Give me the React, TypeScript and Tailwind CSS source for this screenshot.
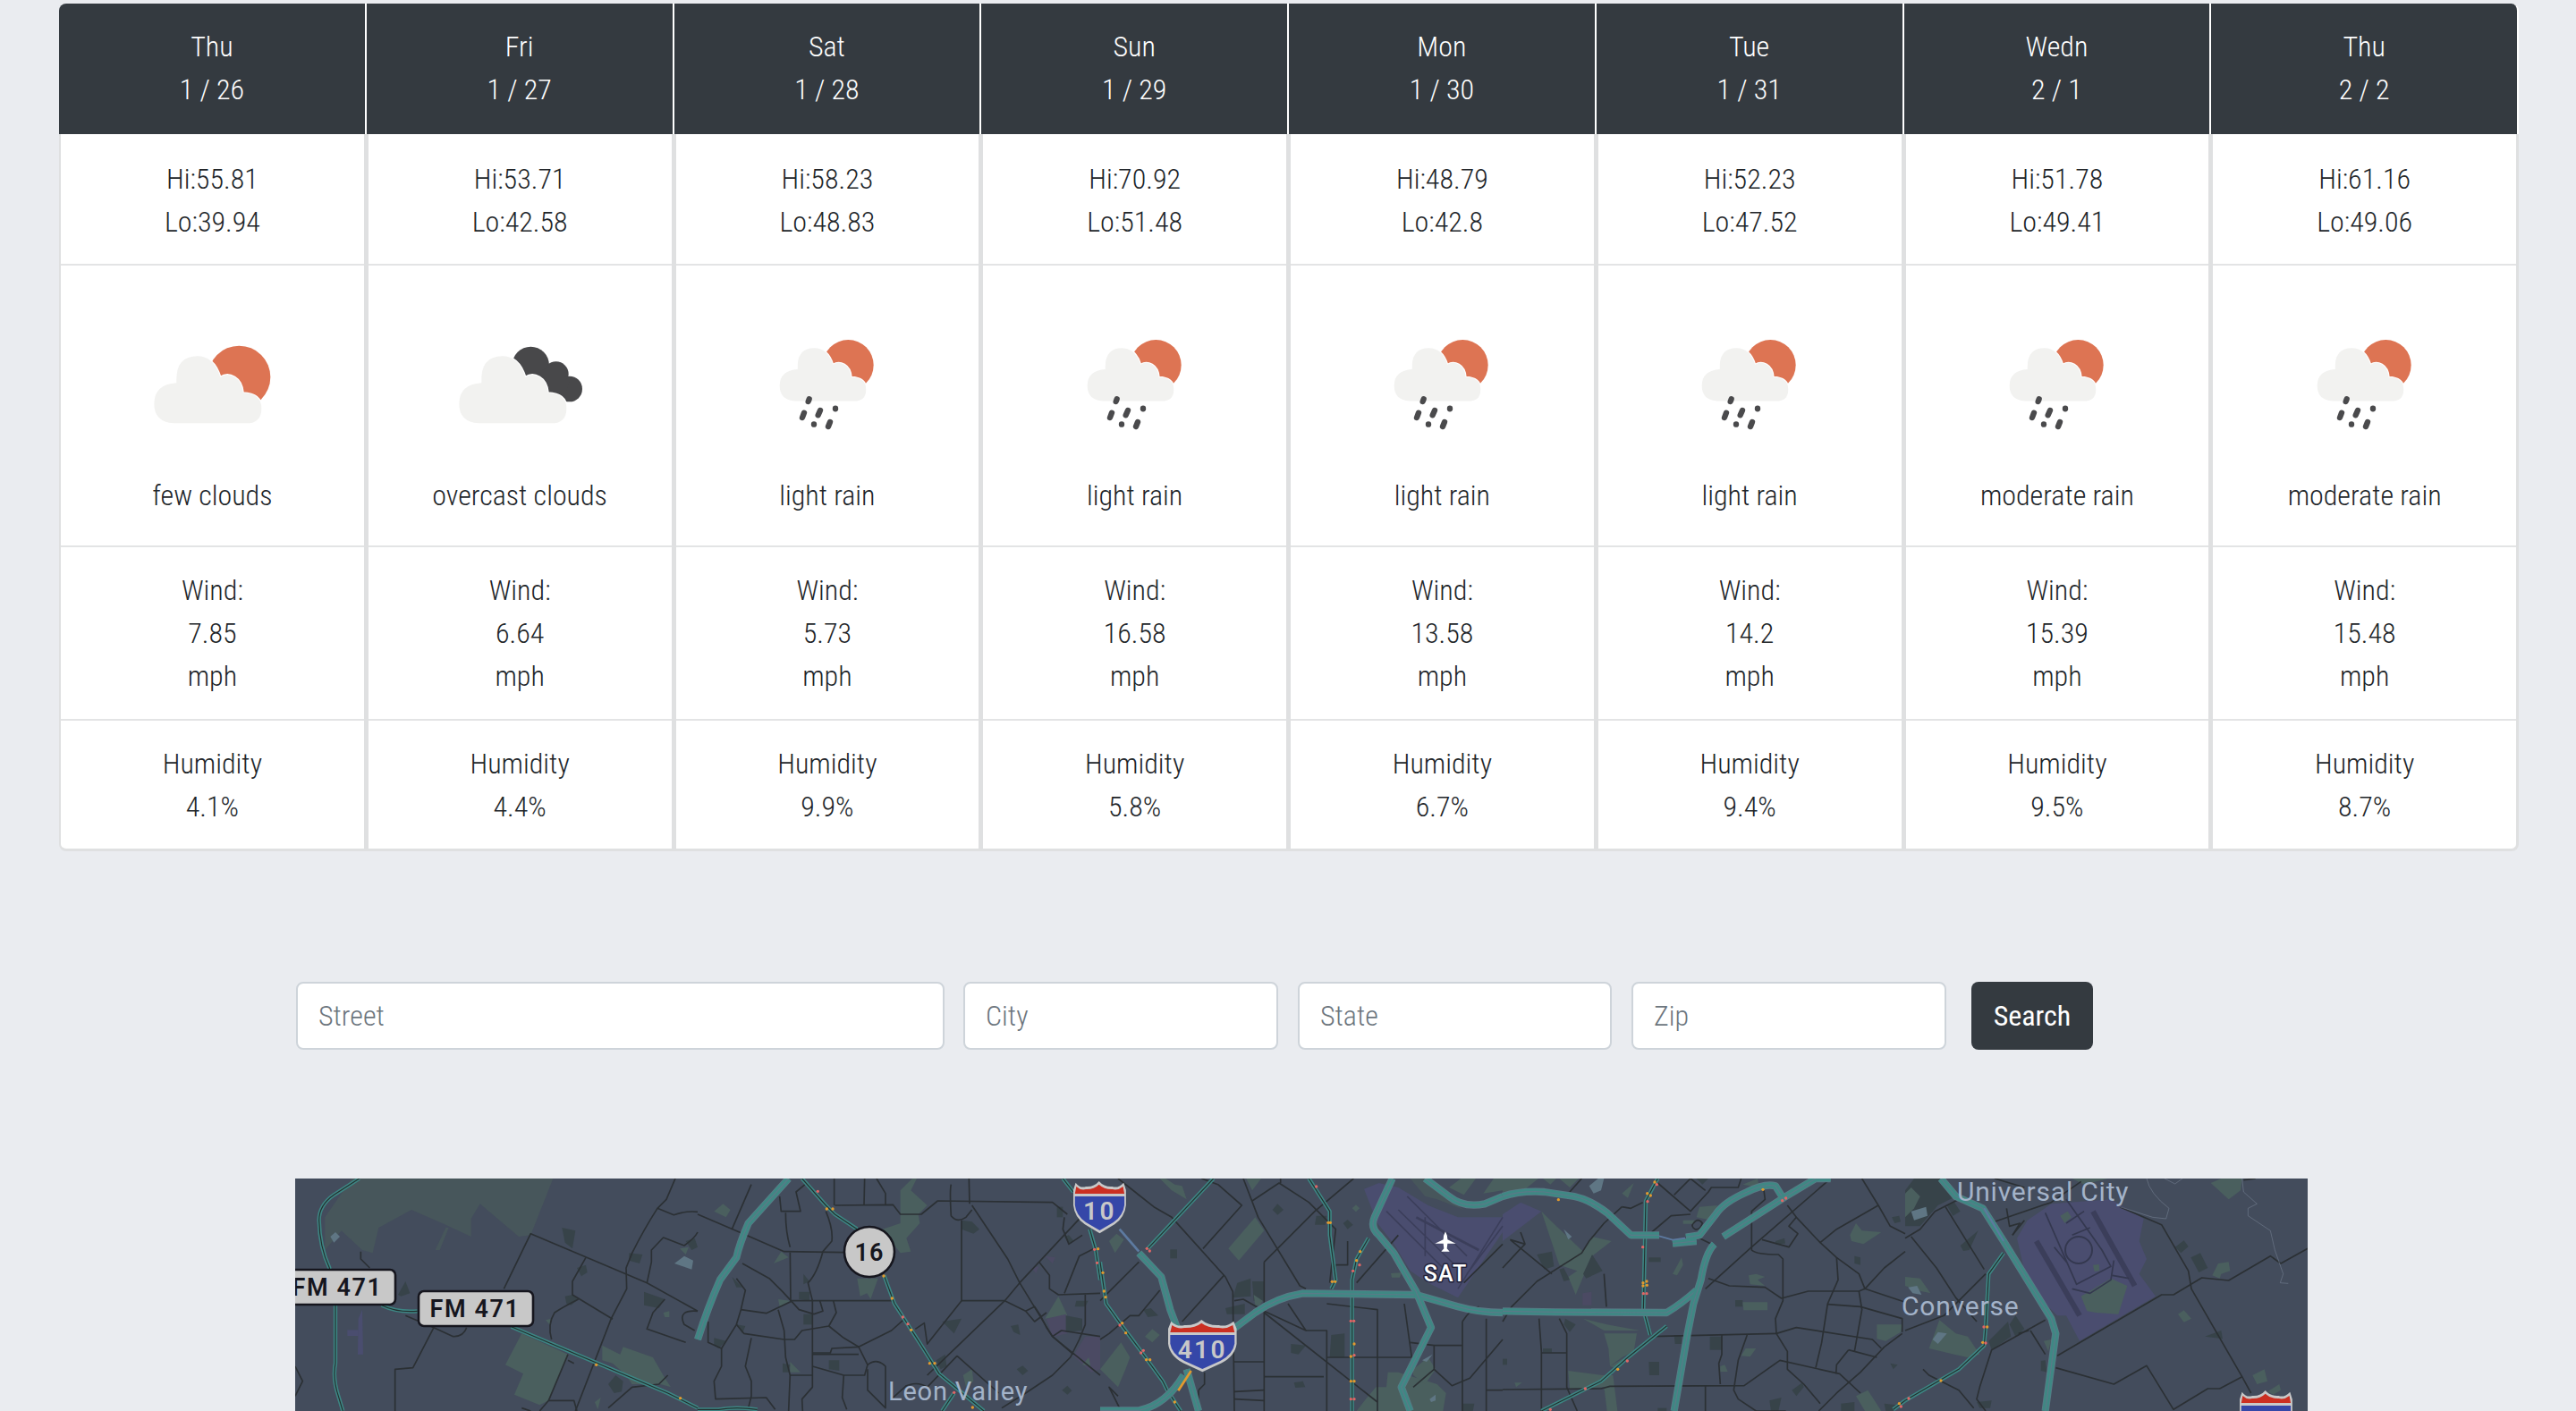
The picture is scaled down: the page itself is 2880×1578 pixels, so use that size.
import React from "react";

const days = [
  { d: "Thu", date: "1 / 26", hi: "55.81", lo: "39.94", icon: "few", desc: "few clouds", wind: "7.85", hum: "4.1%" },
  { d: "Fri", date: "1 / 27", hi: "53.71", lo: "42.58", icon: "over", desc: "overcast clouds", wind: "6.64", hum: "4.4%" },
  { d: "Sat", date: "1 / 28", hi: "58.23", lo: "48.83", icon: "rain", desc: "light rain", wind: "5.73", hum: "9.9%" },
  { d: "Sun", date: "1 / 29", hi: "70.92", lo: "51.48", icon: "rain", desc: "light rain", wind: "16.58", hum: "5.8%" },
  { d: "Mon", date: "1 / 30", hi: "48.79", lo: "42.8", icon: "rain", desc: "light rain", wind: "13.58", hum: "6.7%" },
  { d: "Tue", date: "1 / 31", hi: "52.23", lo: "47.52", icon: "rain", desc: "light rain", wind: "14.2", hum: "9.4%" },
  { d: "Wedn", date: "2 / 1", hi: "51.78", lo: "49.41", icon: "rain", desc: "moderate rain", wind: "15.39", hum: "9.5%" },
  { d: "Thu", date: "2 / 2", hi: "61.16", lo: "49.06", icon: "rain", desc: "moderate rain", wind: "15.48", hum: "8.7%" },
];

const CLOUD = "M165,340 Q100,335 100,275 Q100,210 175,205 Q170,115 245,115 Q300,115 322,185 Q345,170 370,185 Q395,200 398,238 Q460,240 460,290 Q460,340 410,340 Z";

function WeatherIcon({ kind }: { kind: string }) {
  if (kind === "few") {
    return (
      <svg viewBox="0 0 200 200" className="h-[200px] w-[200px]">
        <g transform="translate(2 40) scale(.33333)">
          <circle cx="385" cy="185" r="105" fill="#dd7453" />
          <path d={CLOUD} fill="#f2f2f0" stroke="#fff" strokeWidth="7" />
          <path d={CLOUD} fill="#f2f2f0" />
        </g>
      </svg>
    );
  }
  if (kind === "over") {
    return (
      <svg viewBox="0 0 200 200" className="h-[200px] w-[200px]">
        <g transform="translate(9 40) scale(.33333)">
          <g fill="#48484a">
            <circle cx="310" cy="145" r="62" />
            <circle cx="395" cy="175" r="42" />
            <circle cx="440" cy="225" r="43" />
            <polygon points="300,190 390,140 440,200 420,260 330,220" />
          </g>
          <g transform="translate(-30 0)">
            <path d={CLOUD} fill="#f2f2f0" stroke="#fff" strokeWidth="7" />
            <path d={CLOUD} fill="#f2f2f0" />
          </g>
        </g>
      </svg>
    );
  }
  return (
    <svg viewBox="0 0 200 200" className="h-[200px] w-[200px]">
      <g transform="translate(-5 20) scale(.33333)">
        <circle cx="385" cy="205" r="85" fill="#dd7453" />
        <g transform="translate(74.5 57.15) scale(.805 .79)">
          <path d={CLOUD} fill="#f2f2f0" stroke="#fff" strokeWidth="8" />
          <path d={CLOUD} fill="#f2f2f0" />
        </g>
        <g stroke="#4a4a4c" strokeWidth="19" strokeLinecap="round">
          <line x1="254" y1="319" x2="251" y2="327" />
          <line x1="237" y1="365" x2="231" y2="381" />
          <line x1="291" y1="357" x2="284" y2="373" />
          <line x1="342" y1="350" x2="342" y2="352" />
          <line x1="270" y1="403" x2="270" y2="404" />
          <line x1="324" y1="396" x2="318" y2="411" />
        </g>
      </g>
    </svg>
  );
}

const C = { g: "#4a5f5e", d: "#374349", b: "#47565b", w: "#5f7684", a: "#4a4d6f", v: "#4b4a63" };

type Crop = { x: number; parks: [string, string][]; minor: string[]; sec: string[]; fwy: string[]; dots: [number, number, string?][] };

const crops: Crop[] = [
  {
    x: 0,
    parks: [
      [C.b, "100,130 190,0 865,0 790,190 750,195 620,85 590,135 590,195 505,155 390,105 280,165 260,250 225,240 155,175 100,240"],
      [C.b, "505,165 515,165 485,240 470,240"],
      [C.g, "705,625 760,520 915,590 850,745 820,760 735,725 765,655"],
      [C.g, "1030,560 1060,575 1090,590 1100,565 1200,600 1240,670 1260,700 1225,690 1130,690 1110,660 1065,620 1030,610"],
      [C.d, "1050,690 1075,660 1100,680 1095,715 1070,720"],
      [C.d, "895,165 940,175 930,235 905,215"],
      [C.d, "1120,250 1165,255 1155,285 1120,275"],
      [C.d, "945,300 975,290 980,315 960,328"],
      [C.d, "1170,380 1240,405 1220,435 1170,425"],
      [C.d, "905,395 930,390 950,405 925,425 910,420"],
      [C.d, "345,390 370,345 385,385 355,395"],
      [C.d, "1310,210 1340,200 1350,230 1330,240"],
      [C.w, "1272,285 1305,260 1335,275 1330,305"],
      [C.g, "1290,235 1320,230 1310,255"],
      [C.g, "1235,450 1255,445 1255,465 1240,465"],
      [C.g, "840,475 860,470 855,492"],
      [C.g, "1005,750 1025,735 1015,775"],
      [C.w, "118,195 135,180 150,195 130,215"],
      [C.a, "212,470 225,440 228,590 210,590"],
      [C.a, "175,508 212,508 212,528 175,528"],
    ],
    minor: [
      "M700,370 L790,185 L1180,350 L1350,445",
      "M1275,0 L1245,70 L1215,100 Q1170,170 1130,250 L1110,300 L1112,370 L1060,470 L940,780",
      "M1215,100 L1270,122 Q1310,108 1350,112",
      "M975,265 L930,345 L930,390 L1065,472",
      "M950,405 Q900,430 870,450 Q845,490 860,540",
      "M1180,350 L1195,280 L1195,240 L1235,198 L1305,225 Q1340,200 1350,180",
      "M1240,405 L1200,450 L1180,505 L1310,550 M1350,445 Q1280,440 1305,490 L1340,510",
      "M465,500 L395,635 L335,640 L335,780",
      "M370,460 L465,500 L530,530 Q565,530 575,500",
      "M0,630 L25,680 L0,730",
      "M915,590 L850,745 L820,780 M915,610 L935,620",
      "M760,770 L790,780 M850,745 L935,745 L945,780",
      "M1250,660 L1220,690 L1130,700 L1050,770",
      "M220,245 L220,270 L250,300",
    ],
    sec: [
      "M215,0 L130,55 Q80,90 80,140 Q82,230 115,300 L135,420 L135,620 Q125,670 145,730 L160,780",
      "M290,425 Q340,450 410,445",
      "M725,497 L1250,720 L1350,770",
    ],
    fwy: [],
    dots: [[1010, 625], [1292, 737]],
  },
  {
    x: 450,
    parks: [
      [C.g, "720,0 735,0 715,40 770,90 740,120 745,150 700,200 715,245 680,250 640,200 620,170 680,150 680,100 680,40"],
      [C.g, "535,335 605,335 580,405 568,385 545,395"],
      [C.g, "55,110 85,85 110,105 95,130"],
      [C.g, "255,285 280,245 305,265"],
      [C.g, "270,405 310,410 275,430"],
      [C.g, "310,615 345,650 310,650"],
      [C.d, "355,320 375,345 355,355"],
      [C.d, "340,380 375,380 375,410 340,405"],
      [C.d, "355,455 385,455 385,490 355,490"],
      [C.d, "440,610 475,610 475,645 440,640"],
      [C.d, "285,620 310,625 305,650 285,650"],
      [C.d, "55,535 95,545 70,570 55,560"],
      [C.d, "115,330 150,365 130,365"],
      [C.d, "130,490 160,495 150,520"],
      [C.d, "820,480 885,470 860,520"],
      [C.d, "1050,495 1075,490 1082,525 1060,515"],
      [C.d, "800,610 830,590 835,630 815,640"],
      [C.d, "1070,640 1090,628 1108,645 1090,660"],
      [C.d, "1222,710 1240,695 1255,712 1240,725"],
      [C.d, "885,140 920,145 945,170 925,185 885,170"],
      [C.d, "1205,95 1225,95 1225,130 1205,130"],
      [C.d, "1230,195 1245,190 1262,210 1245,220"],
      [C.g, "1165,470 1210,395 1240,460"],
      [C.v, "1170,470 1235,455 1240,520 1190,532"],
      [C.v, "1260,595 1300,530 1350,530 1350,640 1320,650"],
      [C.d, "1235,460 1290,470 1290,510 1235,515"],
      [C.d, "1270,410 1310,410 1300,430 1265,430"],
      [C.g, "1290,625 1312,600 1318,630"],
      [C.v, "1165,260 1200,265 1190,285"],
      [C.v, "1120,300 1145,295 1135,318"],
      [C.g, "890,660 920,640 925,680 900,700"],
    ],
    minor: [
      "M0,120 L140,180 L290,245 L490,248",
      "M180,20 L115,170",
      "M310,248 L312,410 L655,410",
      "M295,115 Q295,180 310,230",
      "M360,20 L330,45 L345,110 L280,110 L275,60",
      "M430,110 Q455,170 450,210 L420,245 Q400,320 370,350 L385,410 L385,700 L350,740 L352,780",
      "M460,90 L655,88 L680,120 L750,120 L805,75 L1190,80 L1240,120",
      "M458,0 L458,90 M560,0 L558,88 M600,0 L630,50 L630,88 M850,20 Q845,40 850,125 Q870,150 900,130 L920,105 M910,0 L912,85 M885,140 L885,410 L1030,410",
      "M920,90 L1040,270 L1080,350 L1190,530 L1350,660",
      "M1285,130 L1080,350 L1030,410 L770,660",
      "M885,410 L770,555 L760,485 L730,505",
      "M150,285 L240,335 L285,380 L315,412 L340,440 L390,455 L420,445 L410,410",
      "M130,335 L160,375 L145,440 L130,490 L80,570 L35,550 L35,480",
      "M145,440 L230,452 L315,412",
      "M270,440 L290,510 L295,600 L310,660 L305,780",
      "M130,490 L155,520 L290,540 L325,540 L350,510 L440,495 L465,450 L455,410",
      "M180,535 L160,630 L180,680 L180,730 L170,770",
      "M80,570 L80,630 L55,680 L60,740 L230,735 L260,775",
      "M440,495 L490,535 L540,565 L570,625 L560,660 L490,660 L385,630",
      "M385,585 L445,585 L450,570 L540,565 L650,510 L695,470",
      "M385,590 L540,590",
      "M310,660 L385,660 M490,660 L485,735 L500,775",
      "M570,625 Q600,600 630,630 L630,770 L570,710 L570,640",
      "M1030,410 L1100,445 L1130,430 L1150,460 L1170,500 L1190,530 L1260,590 M1100,445 L1130,480 L1170,450",
      "M1190,530 L1220,510 L1350,530",
      "M1145,280 L1180,325 L1180,370 L1210,390 L1350,385 M1230,385 L1280,260 L1330,235",
      "M1250,600 L1280,540 L1300,490 L1300,390",
      "M870,595 L1010,720 M1250,600 L1190,660 L1100,720 L1020,770",
      "M770,700 Q740,680 700,695 L650,740 M870,595 L770,700",
      "M1230,130 L1225,170 L1245,220 L1290,190",
    ],
    sec: [
      "M350,0 L430,90 L460,120 L535,170",
      "M625,325 L660,420 L750,560 L810,655 L960,780",
      "M1225,0 L1260,45",
      "M1315,170 L1335,240 L1350,340",
      "M0,775 L70,775 Q130,765 200,775",
      "M820,780 L860,720",
    ],
    fwy: ["M305,0 L170,150 Q140,220 130,265 L75,340 Q35,430 0,540"],
    dots: [
      [403, 43, "#e06666"], [433, 102], [453, 102], [624, 327], [652, 402], [688, 465, "#e06666"], [705, 488, "#e06666"],
      [716, 508], [778, 620], [795, 620], [860, 718, "#e06666"], [922, 768], [1331, 238, "#e06666"], [1343, 236], [1340, 283, "#e06666"],
    ],
  },
  {
    x: 900,
    parks: [
      [C.g, "430,235 520,130 550,175 465,275"],
      [C.g, "30,210 55,185 80,205 50,250"],
      [C.g, "150,530 175,505 200,525 175,550"],
      [C.g, "0,640 70,550 100,600 85,640 60,700"],
      [C.g, "200,0 220,0 250,20 275,25 290,70 240,40"],
      [C.g, "490,0 540,0 510,40"],
      [C.d, "725,125 760,125 755,155 720,155"],
      [C.d, "815,150 830,138 848,155 830,170"],
      [C.d, "578,105 595,85 615,105 595,122"],
      [C.g, "845,100 858,88 870,100 858,112"],
      [C.d, "235,238 258,238 258,268 235,268"],
      [C.d, "460,350 505,335 505,395 445,400"],
      [C.d, "510,345 550,345 550,410 515,410"],
      [C.g, "515,390 545,410 535,425 520,425"],
      [C.d, "420,435 485,420 485,455 425,455"],
      [C.d, "145,440 170,435 195,460 160,465"],
      [C.d, "775,525 820,520 820,600 770,600"],
      [C.d, "640,555 690,560 665,590 640,585"],
      [C.d, "650,685 680,680 688,700 655,702"],
      [C.g, "975,318 1010,316 1005,332 978,332"],
      [C.a, "885,35 935,15 1000,30 1100,90 1200,130 1350,130 1350,180 1200,400 1100,350 1040,310 985,220 930,150"],
      [C.b, "1040,0 1090,0 1150,60 1220,105 1130,70 1090,60"],
      [C.g, "1170,30 1210,0 1260,0 1220,55"],
      [C.g, "1285,50 1320,0 1350,0 1350,40"],
      [C.g, "860,780 895,735 925,700 960,700 965,650 1000,650 1130,690 1160,720 1150,780"],
      [C.g, "1050,640 1100,600 1125,640 1090,690 1050,660"],
      [C.w, "1105,740 1125,725 1125,745 1110,750"],
      [C.w, "1080,610 1115,590 1095,615"],
      [C.d, "1215,755 1255,755 1250,780 1215,780"],
    ],
    minor: [
      "M60,0 L180,95 L240,130 L420,330 L445,380 L450,780",
      "M345,235 L475,90 L395,20 L340,0",
      "M480,0 L530,130 L670,360 L690,370",
      "M510,75 L600,15 L700,80 L790,170 L770,350",
      "M605,0 L605,15",
      "M550,280 L550,780",
      "M550,280 L720,110 L850,0",
      "M1000,190 L860,350",
      "M830,210 L830,290 L790,290 L785,340",
      "M415,325 L275,480",
      "M200,375 L130,460 L100,460 L30,520 L0,540",
      "M130,280 L0,410",
      "M450,410 L480,405 L550,445 L690,510 L630,420",
      "M550,450 L930,750",
      "M690,510 L760,510 L760,780 M760,600 L1050,600 M760,420 L930,440 L930,780",
      "M1040,550 L1120,560 L1120,640 L1050,700 M1120,560 L1215,560 M1215,480 L1215,780 M1295,470 L1295,780 M1215,480 Q1240,440 1270,430",
      "M1020,420 L1045,600",
      "M1120,640 L1180,695 L1240,670 L1350,540",
      "M450,615 L550,615 M450,715 L550,710 M550,665 L750,665 M450,740 L550,745 M330,710 L350,690 L350,650 M330,710 L330,780",
      "M1295,710 L1350,710",
      "M1220,350 L1350,220",
      "M60,730 L30,700 L70,780",
    ],
    sec: [
      "M380,0 L160,235",
      "M700,0 L770,110 L770,190 L790,340 L775,370",
      "M900,200 L860,270 L845,340 L845,780",
      "M0,280 L20,420 L70,490 L130,570 L210,680 L225,710 L270,780",
    ],
    fwy: [
      "M130,250 L205,330 L235,440 L265,520",
      "M290,640 L330,780",
      "M0,778 L130,778 Q220,760 280,660",
      "M440,510 L520,450 Q590,400 680,385 L1060,390 L1200,430 Q1270,450 1350,450",
      "M980,0 L920,130 Q905,165 935,190 L985,250 L1060,380 L1110,500 L1060,600 L1010,700 L1040,780",
      "M1090,0 L1170,60 Q1220,100 1290,85 L1350,60",
    ],
    dots: [
      [725, 27, "#e06666"], [765, 148], [772, 148], [778, 346], [788, 346], [848, 310, "#e06666"], [860, 275], [872, 245], [870, 290, "#e06666"],
      [841, 478, "#e06666"], [851, 478, "#e06666"], [852, 555], [841, 597], [852, 593, "#e06666"], [841, 680], [852, 680], [841, 740, "#e06666"], [852, 740, "#e06666"],
      [9, 316], [13, 378], [18, 398], [66, 492, "#e06666"], [74, 485], [86, 518], [137, 585, "#e06666"], [145, 577, "#e06666"], [155, 608], [167, 608], [250, 750], [157, 235, "#e06666"], [166, 243, "#e06666"],
    ],
  },
  {
    x: 1350,
    parks: [
      [C.a, "0,120 60,80 130,110 0,210"],
      [C.g, "130,110 170,150 270,245 300,195 365,210 300,260 270,330 245,390 220,330 250,310 190,290"],
      [C.d, "300,255 335,310 280,335 270,320"],
      [C.d, "115,255 165,245 172,295 140,305"],
      [C.d, "190,305 205,300 225,340 205,345"],
      [C.v, "268,385 298,380 298,425 268,425"],
      [C.w, "290,25 320,0 340,0 330,40 305,50"],
      [C.w, "205,170 232,195 220,205"],
      [C.g, "400,50 440,15 420,65"],
      [C.g, "0,0 120,0 70,40 0,45"],
      [C.g, "135,0 180,0 160,20"],
      [C.g, "190,0 255,0 225,30"],
      [C.d, "650,0 690,0 670,20"],
      [C.g, "660,95 720,90 700,140 650,130"],
      [C.g, "605,140 650,140 640,152 605,152"],
      [C.g, "805,20 855,0 860,30"],
      [C.d, "490,265 530,265 530,280 490,280"],
      [C.g, "570,320 600,265 605,290 585,325"],
      [C.d, "695,530 735,530 735,575 695,575"],
      [C.d, "575,525 600,525 600,555 578,555"],
      [C.d, "490,615 525,615 525,660 492,660"],
      [C.g, "800,595 815,570 850,570 830,598"],
      [C.g, "730,630 745,625 755,648 730,648"],
      [C.d, "780,408 805,408 805,430 780,430"],
      [C.g, "805,415 888,415 888,442 808,442"],
      [C.g, "825,325 850,320 880,330 855,340 880,360 830,355"],
      [C.g, "1165,190 1185,150 1205,175 1270,180 1210,220 1170,210"],
      [C.d, "915,210 945,200 948,218 915,220"],
      [C.d, "1305,130 1330,125 1335,145 1315,150"],
      [C.d, "1180,260 1200,265 1200,290 1180,285"],
      [C.g, "1255,490 1340,490 1335,515 1285,545 1255,538"],
      [C.d, "1300,620 1325,625 1310,640"],
      [C.d, "970,710 1005,685 1010,700 985,730"],
      [C.d, "895,745 935,735 925,780 900,780"],
      [C.g, "1185,730 1225,710 1270,780 1215,780"],
      [C.d, "1135,755 1180,750 1180,780 1135,780"],
      [C.d, "1280,755 1320,760 1310,780 1285,780"],
      [C.g, "220,645 335,660 370,660 385,780 350,780 340,700 225,705"],
      [C.g, "340,520 450,520 440,580 400,600 360,630 355,570"],
      [C.g, "270,470 350,490 460,510 340,510"],
      [C.g, "360,630 410,600 390,640"],
      [C.d, "210,470 245,490 225,515 205,490"],
      [C.g, "40,685 65,685 45,700"],
      [C.d, "0,605 15,605 15,625 0,625"],
      [C.d, "135,570 165,570 165,583 135,583"],
      [C.d, "520,770 550,770 550,780 520,780"],
    ],
    minor: [
      "M225,45 L265,0",
      "M400,95 L430,100 L470,80",
      "M400,95 L340,150 L290,210 L265,250 L115,345 L30,430 L0,480",
      "M520,15 L630,110 L690,45 L700,30 L790,30 L800,0",
      "M630,0 L680,40 M575,55 L630,0",
      "M500,180 L565,125 L630,120",
      "M640,150 Q655,130 670,150 Q660,175 645,170 Q630,160 640,150",
      "M0,300 L60,235 L75,220 L25,205 M60,180 L75,220 M25,205 L165,320",
      "M340,320 L348,430",
      "M1205,0 L1260,90 L1300,160 L1350,185",
      "M1260,90 L1120,170 L1065,215 L1120,265 L1195,320 L1215,370 L1280,300 L1350,245",
      "M1065,215 L985,130 L955,90",
      "M985,130 L960,160 L990,185 L960,230 L870,205",
      "M1100,0 L835,230 L680,370",
      "M835,165 L835,240 Q850,255 925,255 L940,270 L940,410 L915,470 L918,520",
      "M875,30 L880,70 L835,110 L835,165",
      "M690,335 L760,360 L880,365 L935,402 L1025,378 L1195,378 L1215,370 L1350,415",
      "M1120,265 L1125,340 L1090,420 L1070,550 L1050,635",
      "M1090,422 L1200,430 L1340,470 L1340,515",
      "M1195,378 L1205,440 L1180,580",
      "M918,520 L985,500 L1240,540 L1270,570",
      "M500,530 L918,520",
      "M918,520 L955,580 L955,640 L1010,690 L1065,755",
      "M735,525 L735,590 L725,620 L730,690",
      "M820,525 L790,610 L775,710 L790,740 L850,780 L950,780",
      "M0,708 L330,705 L360,697 L810,695 L930,610 L1130,655 L1200,720",
      "M1340,520 L1280,565 L1200,650 L1120,720 L1060,780",
      "M1160,575 L1120,625 L1118,655 M1160,575 L1255,600",
      "M680,695 L680,780",
      "M122,470 L130,580 L130,780",
      "M190,470 L215,520 L215,700 L250,780 M130,585 L215,585",
      "M660,200 L700,220",
    ],
    sec: [
      "M520,0 L480,75 L472,440 L495,525",
      "M550,495 L420,600 L330,680 L130,780",
      "M1350,745 L1310,775",
    ],
    fwy: [
      "M0,60 Q60,40 140,45 L240,60 Q290,70 350,115 L430,190 L525,190",
      "M570,218 L650,210",
      "M615,197 L660,190 L715,120 Q740,80 820,45 Q880,15 915,25 L940,65",
      "M740,195 L950,60 L1050,0 L1100,0",
      "M0,445 L180,448 L550,450 Q600,420 650,375",
      "M710,220 Q680,250 665,340 L640,420 L620,520 L575,780",
    ],
    dots: [
      [510, 12], [517, 20, "#e06666"], [485, 50], [496, 57], [486, 77, "#e06666"], [187, 71], [873, 37], [470, 230, "#e06666"],
      [471, 350], [471, 360], [483, 345], [484, 358], [472, 386, "#e06666"], [483, 386, "#e06666"], [938, 74, "#e06666"], [950, 66, "#e06666"],
      [386, 640], [418, 612, "#e06666"], [277, 705, "#e06666"], [160, 775, "#e06666"], [1330, 755], [1336, 765, "#e06666"],
    ],
  },
  {
    x: 1800,
    parks: [
      [C.d, "0,40 30,0 130,0 170,60 110,90 50,160 0,160"],
      [C.w, "20,110 70,95 75,125 30,140"],
      [C.g, "0,50 20,30 50,60 30,100 0,130"],
      [C.d, "140,90 165,80 185,110 160,125"],
      [C.d, "185,225 245,175 215,240 195,243"],
      [C.g, "0,330 50,335 85,385 40,375 0,360"],
      [C.w, "10,365 40,360 55,390 25,385"],
      [C.g, "80,570 115,475 170,520 210,530 250,590 210,600 165,590"],
      [C.w, "92,540 110,515 140,520 110,555"],
      [C.d, "280,545 345,480 355,530 290,575"],
      [C.d, "350,490 370,460 400,505 370,530"],
      [C.a, "375,200 410,140 490,85 690,70 800,135 785,210 810,270 785,320 840,395 585,545 540,460 510,460 470,420 400,310"],
      [C.g, "590,395 690,335 745,360 715,455 640,450 610,445"],
      [C.g, "630,290 650,288 652,310 635,312"],
      [C.g, "520,125 545,110 558,130 535,150"],
      [C.g, "465,545 490,540 480,580"],
      [C.d, "455,612 470,610 475,650 455,645"],
      [C.g, "1025,15 1060,0 1130,0 1125,40 1085,70"],
      [C.g, "1030,325 1050,285 1085,280 1090,310 1060,320 1055,335"],
      [C.d, "905,230 935,208 950,228 925,250"],
      [C.d, "958,265 990,250 1015,300 985,315"],
      [C.g, "915,455 935,442 960,470 935,482"],
      [C.d, "1005,530 1060,510 1065,538"],
      [C.g, "1165,660 1205,640 1215,680 1180,690"],
      [C.g, "1215,715 1255,690 1260,710 1235,725"],
      [C.d, "240,750 290,745 285,770 250,770"],
      [C.g, "560,0 680,0 600,20"],
    ],
    minor: [
      "M0,200 L50,170 L100,110 L180,70",
      "M20,195 L105,300 L170,400 L240,480",
      "M135,95 L265,305",
      "M0,510 L130,460 L270,320",
      "M470,475 L290,575 L250,700 L240,740 L270,780",
      "M60,640 L80,660 L180,710 L230,770",
      "M300,145 L490,80 L590,10",
      "M300,0 L400,30",
      "M340,100 L350,160 L385,150 L360,190",
      "M720,95 L860,155 L950,310 L960,370 L1130,665 L1160,720",
      "M510,595 L860,390 L900,390 L995,333 L1085,342 L1225,260 L1260,285 L1350,235",
      "M505,635 L700,690 L810,628 L900,775 L1015,705 L1055,705 L1130,665",
      "M420,510 L470,590",
      "M1135,5 L1175,0",
      "M380,520 L415,510",
      "M400,140 L360,190",
    ],
    sec: ["M330,250 L280,320 L270,500 L265,560 L180,640 L0,745"],
    fwy: ["M120,0 L170,60 L260,100 L330,210 L490,470 L505,520 L470,780"],
    dots: [[264, 498, "#e06666"], [275, 498], [260, 550], [270, 552, "#e06666"], [120, 678], [12, 738, "#e06666"]],
  },
];

function Shield({ x, y, sx, label, fs }: { x: number; y: number; sx: number; label: string; fs: number }) {
  return (
    <g>
      <g transform={`translate(${x} ${y}) scale(${sx} .33333)`}>
        <path d="M10,5 Q30,25 55,18 Q90,20 112,0 Q135,20 170,18 Q195,25 220,5 L230,30 L230,80 Q225,120 180,145 L115,175 L50,145 Q5,120 0,80 L0,30 Z" fill="#c8c8c8" />
        <path d="M13,18 Q32,32 55,27 Q90,28 112,11 Q135,28 170,27 Q195,32 217,18 L223,42 L7,42 Z" fill="#cb2f22" />
        <path d="M7,51 L223,51 L223,80 Q218,115 175,138 L115,165 L55,138 Q12,115 7,80 Z" fill="#3547a8" />
      </g>
      {label && (
        <text x={x + 115 * sx} y={y + 43} textAnchor="middle" fontFamily="Roboto, sans-serif" fontWeight="600" fontSize={fs} letterSpacing="2.4" fill="#c8c8c8">
          {label}
        </text>
      )}
    </g>
  );
}

function FmBadge({ x, y, w }: { x: number; y: number; w: number }) {
  return (
    <g>
      <rect x={x} y={y} width={w} height={39} rx="6" fill="#c8c8c8" stroke="#16161e" strokeWidth="2.6" />
      <text x={x + w - 65} y={y + 29} textAnchor="middle" fontFamily="Roboto, sans-serif" fontWeight="600" fontSize="27" letterSpacing="1.6" fill="#16161e">
        FM 471
      </text>
    </g>
  );
}

function MapDrawing() {
  return (
    <svg viewBox="0 0 2250 260" className="block h-[260px] w-[2250px] [font-stretch:100%]" strokeLinejoin="round">
      <rect width="2250" height="260" fill="#434c5c" />
      {crops.map((c) => (
        <g key={c.x} transform={`translate(${c.x} 0) scale(.33333)`}>
          {c.parks.map((p, i) => (
            <polygon key={i} points={p[1]} fill={p[0]} />
          ))}
        </g>
      ))}
      <g transform="translate(1800 0) scale(.33333)" fill="none" stroke="#3b3e5a" strokeLinejoin="round">
        <path d="M440,210 L585,460 M630,110 L770,360" strokeWidth="18" />
        <path d="M470,115 L575,355 L690,295 L660,240 L540,70 M500,230 L545,285 M540,150 L600,110 M560,190 L620,165 M560,370 L620,385 L690,340 L700,275 M695,325 L750,335" strokeWidth="5" stroke="#34384f" />
        <circle cx="582" cy="240" r="45" strokeWidth="6" stroke="#34384f" />
      </g>
      <g transform="translate(900 0) scale(.33333)" fill="none" stroke="#3b3e5a" strokeWidth="5">
        <path d="M960,110 L1180,330 M1000,105 L1200,300 M1030,60 L1230,260 M1350,130 L1200,370 M1350,160 L1230,320 M1090,130 L1090,260" />
        <path d="M1060,130 L1270,240" strokeWidth="8" />
      </g>
      {crops.map((c) => (
        <g key={c.x} transform={`translate(${c.x} 0) scale(.33333)`} fill="none">
          {c.minor.map((d, i) => (
            <path key={i} d={d} stroke="#2b3034" strokeWidth="5" />
          ))}
        </g>
      ))}
      <g transform="translate(1800 0) scale(.33333)" fill="none" stroke="#7d8a9c" strokeWidth="1.5">
        <path d="M810,0 Q820,50 885,100 L875,135 L830,130 L720,95 M870,0 L905,18 L930,0 M1130,0 L1135,45 L1180,85 L1150,100 L1150,125 L1225,175 L1240,240 L1268,320 L1258,350 L1285,352" />
      </g>
      {crops.map((c) => (
        <g key={c.x} transform={`translate(${c.x} 0) scale(.33333)`} fill="none">
          {c.sec.map((d, i) => (
            <g key={i}>
              <path d={d} stroke="#3d8583" strokeWidth="13" />
              <path d={d} stroke="#23302f" strokeWidth="3.5" />
            </g>
          ))}
          {c.fwy.map((d, i) => (
            <path key={i} d={d} stroke="#5a7a86" strokeWidth="25" />
          ))}
          {c.fwy.map((d, i) => (
            <g key={i}>
              <path d={d} stroke="#3f8884" strokeWidth="20" />
              <path d={d} stroke="#5b7a88" strokeWidth="3.5" />
            </g>
          ))}
          {c.dots.map((p, i) => (
            <circle key={i} cx={p[0]} cy={p[1]} r="5" fill={p[2] || "#e29a2e"} />
          ))}
        </g>
      ))}
      <g fill="none" transform="translate(900 0) scale(.33333)">
        <path d="M262,712 L305,645" stroke="#e29a2e" strokeWidth="8" />
        <path d="M65,170 L130,245" stroke="#5d7aa0" strokeWidth="8" />
      </g>
      <g fill="none" transform="translate(1350 0) scale(.33333)">
        <path d="M525,193 L570,206 L612,200" stroke="#5d7aa0" strokeWidth="5" />
      </g>
      <g fill="none" transform="translate(1800 0) scale(.33333)">
        <path d="M265,100 L330,210" stroke="#5d7aa0" strokeWidth="6" />
      </g>

      <FmBadge x={-8} y={102} w={120} />
      <FmBadge x={138} y={126} w={128} />

      <circle cx="642" cy="82" r="28" fill="#c8c8c8" stroke="#16161e" strokeWidth="2.6" />
      <text x="642" y="92" textAnchor="middle" fontFamily="Roboto, sans-serif" fontWeight="600" fontSize="27" letterSpacing="1" fill="#16161e">
        16
      </text>

      <Shield x={870} y={3} sx={0.256} label="10" fs={28} />
      <Shield x={976} y={158} sx={0.333} label="410" fs={28} />
      <Shield x={2174} y={237} sx={0.256} label="" fs={28} />

      <g transform="translate(900 0) scale(.33333)">
        <path d="M1158,178 Q1165,190 1165,205 L1193,218 L1165,218 L1163,235 L1172,245 L1144,245 L1153,235 L1151,218 L1123,218 L1151,205 Q1151,190 1158,178 Z" fill="#fff" />
      </g>
      <text x="1286" y="115" textAnchor="middle" fontFamily="Roboto, sans-serif" fontWeight="500" fontSize="25" letterSpacing="1" fill="#fff" stroke="#22233a" strokeWidth="3" paintOrder="stroke">
        SAT
      </text>
      <text x="663" y="248" fontFamily="Roboto, sans-serif" fontSize="29" fontWeight="400" letterSpacing=".8" fill="#a3b3c9">
        Leon Valley
      </text>
      <text x="1796" y="153" fontFamily="Roboto, sans-serif" fontSize="30" fontWeight="400" letterSpacing=".8" fill="#a3b3c9">
        Converse
      </text>
      <text x="1858" y="25" fontFamily="Roboto, sans-serif" fontSize="30" fontWeight="400" letterSpacing=".8" fill="#a3b3c9">
        Universal City
      </text>
    </svg>
  );
}

function Column({ day, index }: { day: (typeof days)[number]; index: number }) {
  const first = index === 0;
  const last = index === days.length - 1;
  return (
    <div className="flex flex-col text-center">
      <div className={`h-[146px] border-r-2 border-white bg-[#343a40] pt-[24px] text-white ${first ? "rounded-tl-[8px]" : ""} ${last ? "rounded-tr-[8px] border-r-0" : ""}`}>
        <div>{day.d}</div>
        <div>{day.date}</div>
      </div>
      <div className={`flex flex-col border-r-[3px] border-l-2 border-b-[3px] border-[#dfe0e1] bg-white ${first ? "rounded-bl-[8px]" : ""} ${last ? "rounded-br-[8px] border-r-2" : ""}`}>
        <div className="h-[147px] border-b-2 border-[#e3e4e5] pt-[26px]">
          <div>Hi:{day.hi}</div>
          <div>Lo:{day.lo}</div>
        </div>
        <div className="flex h-[315px] flex-col items-center border-b-2 border-[#e3e4e5] pt-[23px]">
          <WeatherIcon kind={day.icon} />
          <div className="mt-[10px]">{day.desc}</div>
        </div>
        <div className="h-[194px] border-b-2 border-[#e3e4e5] pt-[24px]">
          <div>Wind:</div>
          <div>{day.wind}</div>
          <div>mph</div>
        </div>
        <div className="h-[143px] pt-[24px]">
          <div>Humidity</div>
          <div>{day.hum}</div>
        </div>
      </div>
    </div>
  );
}

const inputCls =
  "h-[76px] rounded-[8px] border-2 border-[#ced4da] bg-white px-[23px] text-[32px] font-light text-[#495057] outline-none placeholder:text-[#6c757d]";

export default function App() {
  return (
    <div className="h-[1578px] overflow-hidden bg-[#eaecf0] pt-[4px] font-[Roboto,sans-serif] text-[32px] leading-[48px] font-light text-[#212529] [font-stretch:87%]">
      <div className="ml-[66px] grid w-[2750px] grid-cols-8">
        {days.map((day, i) => (
          <Column key={i} day={day} index={i} />
        ))}
      </div>
      <form className="mt-[146px] ml-[331px] flex items-center">
        <input className={`${inputCls} w-[725px]`} placeholder="Street" />
        <input className={`${inputCls} ml-[21px] w-[352px]`} placeholder="City" />
        <input className={`${inputCls} ml-[22px] w-[351px]`} placeholder="State" />
        <input className={`${inputCls} ml-[22px] w-[352px]`} placeholder="Zip" />
        <button type="button" className="ml-[28px] h-[76px] w-[136px] rounded-[8px] bg-[#343a40] text-[32px] font-normal text-white">
          Search
        </button>
      </form>
      <div className="mt-[144px] ml-[330px] w-[2250px]">
        <MapDrawing />
      </div>
    </div>
  );
}
